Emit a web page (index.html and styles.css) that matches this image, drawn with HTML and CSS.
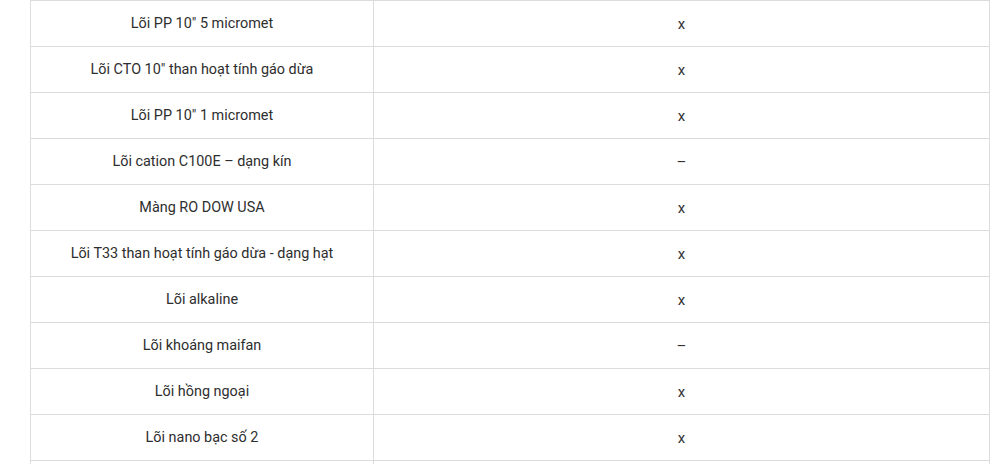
FILE: index.html
```html
<!DOCTYPE html>
<html lang="vi">
<head>
<meta charset="utf-8">
<link rel="stylesheet" href="styles.css">
</head>
<body>
<table class="spec">
  <tbody>
    <tr><td class="name">Lõi PP 10" 5 micromet</td><td class="val">x</td></tr>
    <tr><td class="name">Lõi CTO 10" than hoạt tính gáo dừa</td><td class="val">x</td></tr>
    <tr><td class="name">Lõi PP 10" 1 micromet</td><td class="val">x</td></tr>
    <tr><td class="name">Lõi cation C100E – dạng kín</td><td class="val">–</td></tr>
    <tr><td class="name">Màng RO DOW USA</td><td class="val">x</td></tr>
    <tr><td class="name">Lõi T33 than hoạt tính gáo dừa - dạng hạt</td><td class="val">x</td></tr>
    <tr><td class="name">Lõi alkaline</td><td class="val">x</td></tr>
    <tr><td class="name">Lõi khoáng maifan</td><td class="val">–</td></tr>
    <tr><td class="name">Lõi hồng ngoại</td><td class="val">x</td></tr>
    <tr><td class="name">Lõi nano bạc số 2</td><td class="val">x</td></tr>
    <tr><td class="name">&nbsp;</td><td class="val">&nbsp;</td></tr>
  </tbody>
</table>
</body>
</html>
```

FILE: styles.css
```css
html, body {
  margin: 0;
  padding: 0;
  background: #ffffff;
}
body {
  padding-left: 30px;
  font-family: Roboto, "Liberation Sans", sans-serif;
  font-size: 14.4px;
  color: #2e2e2e;
}
.spec {
  border-collapse: collapse;
  width: 960px;
  table-layout: fixed;
}
.spec td {
  border: 1px solid #dcdcdc;
  height: 45px;
  padding: 0 8px;
  text-align: center;
  vertical-align: middle;
  line-height: 20px;
}
.spec td.name {
  width: 343px;
  box-sizing: border-box;
}
.spec td.val {
  font-size: 15px;
  color: #333333;
}
```
